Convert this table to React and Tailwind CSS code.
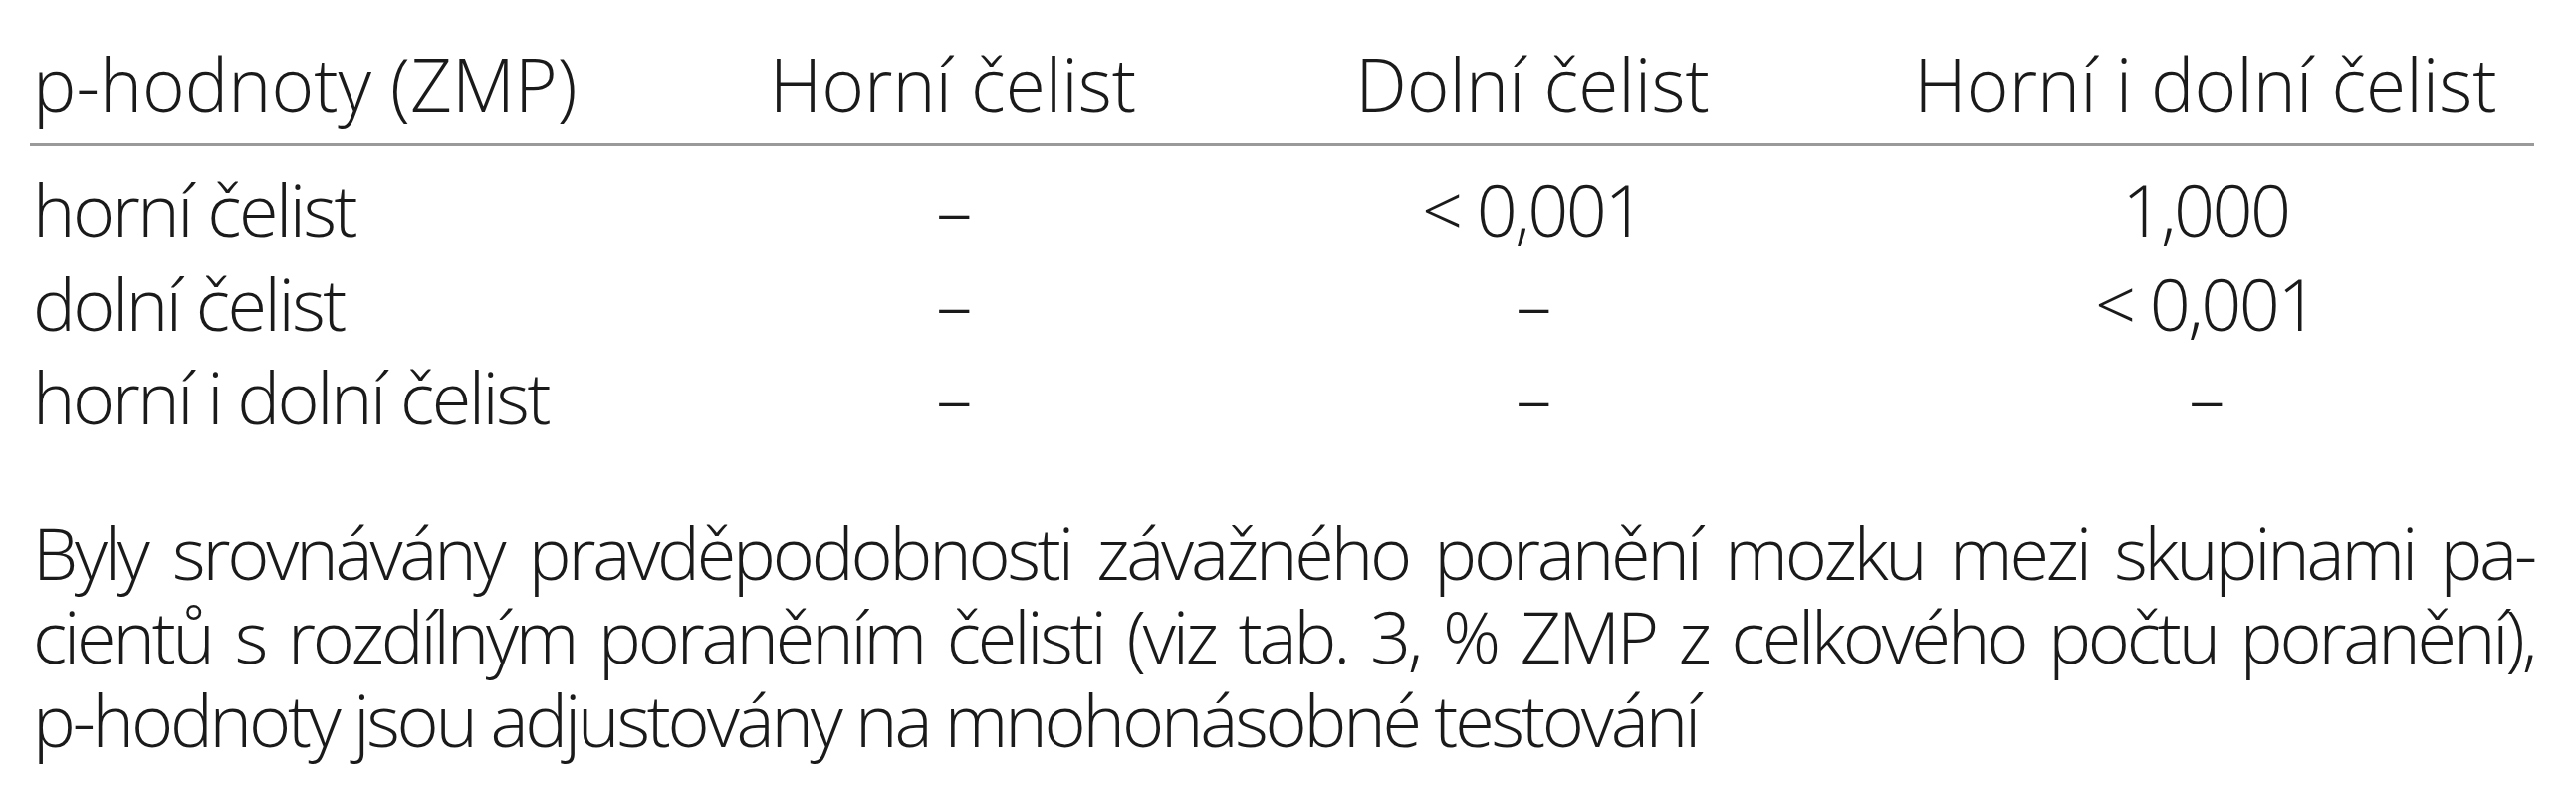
import React from "react";

const rows = [
  { label: "horní čelist", cells: ["–", "< 0,001", "1,000"] },
  { label: "dolní čelist", cells: ["–", "–", "< 0,001"] },
  { label: "horní i dolní čelist", cells: ["–", "–", "–"] },
];

const grid = "grid grid-cols-[630px_594px_631px_660px]";

const App = () => {
  return (
    <div
      className="w-[2587px] h-[800px] bg-white text-[#1a1a1a] text-[72px] font-light"
      style={{ fontFamily: '"Open Sans", "Liberation Sans", sans-serif' }}
    >
      <div className="ml-[30px] w-[2515px] pt-[37px]">
        {/* Header */}
        <div className={`${grid} text-[73px] leading-[94px] pb-[13px] border-b-[3px] border-[#9a9a9a]`}>
          <div className="pl-[3px]">p-hodnoty (ZMP)</div>
          <div className="text-center">Horní čelist</div>
          <div className="text-center pr-[61px]">Dolní čelist</div>
          <div className="text-center">Horní i dolní čelist</div>
        </div>

        {/* Body */}
        <div className="pt-[16px] leading-[94px] tracking-[-2.5px]">
          {rows.map((row) => (
            <div key={row.label} className={grid}>
              <div className="pl-[3px]">{row.label}</div>
              <div className="text-center">{row.cells[0]}</div>
              <div className="text-center pr-[61px]">{row.cells[1]}</div>
              <div className="text-center">{row.cells[2]}</div>
            </div>
          ))}
        </div>
      </div>

      {/* Note */}
      <div className="ml-[33px] w-[2512px] mt-[67px] leading-[84px] tracking-[-3.2px]">
        <div className="text-justify [text-align-last:justify]">
          Byly srovnávány pravděpodobnosti závažného poranění mozku mezi skupinami pa-
        </div>
        <div className="text-justify [text-align-last:justify]">
          cientů s rozdílným poraněním čelisti (viz tab. 3, % ZMP z celkového počtu poranění),
        </div>
        <div>p-hodnoty jsou adjustovány na mnohonásobné testování</div>
      </div>
    </div>
  );
};

export default App;
